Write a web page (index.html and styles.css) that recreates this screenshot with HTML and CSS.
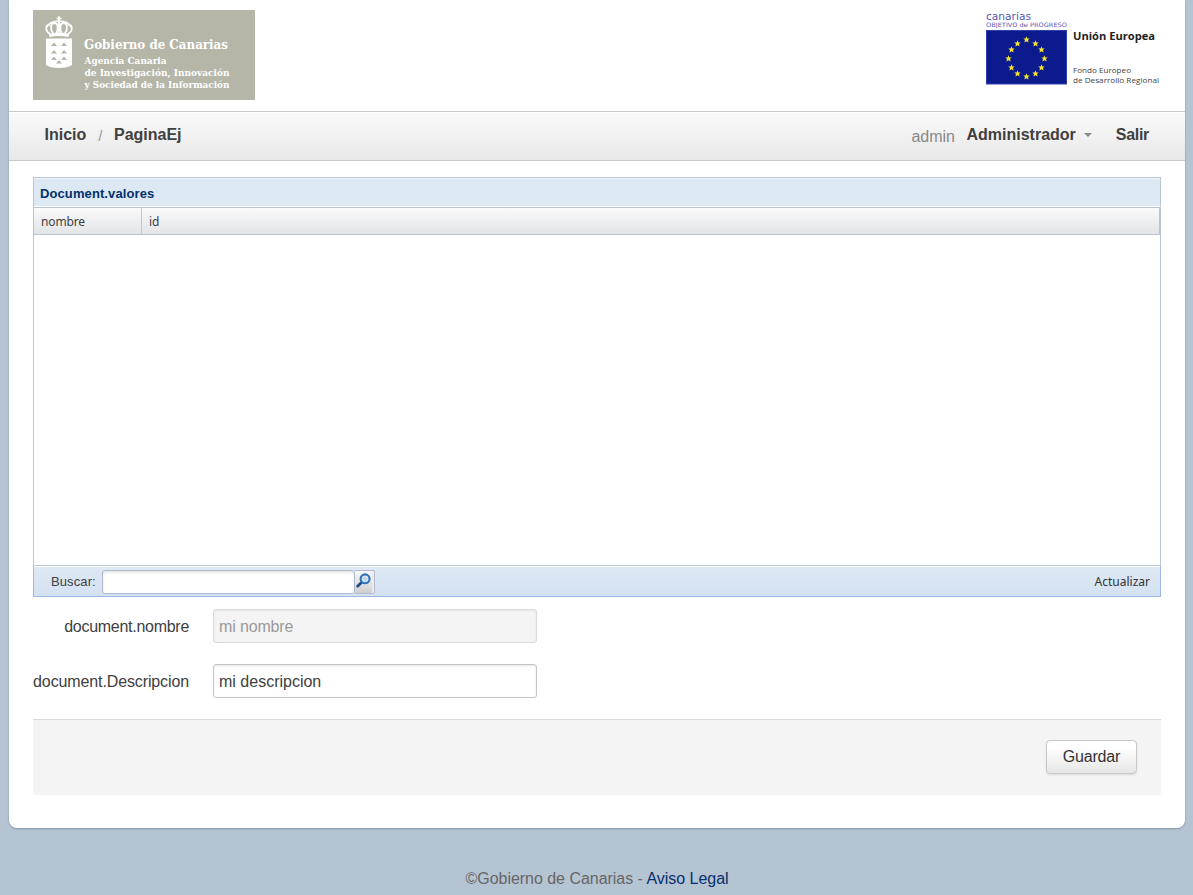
FILE: index.html
```html
<!DOCTYPE html>
<html lang="es">
<head>
<meta charset="utf-8">
<title>PaginaEj</title>
<link rel="stylesheet" href="styles.css">
</head>
<body>
<div class="page">
  <header class="header">
    <svg class="logo" width="222" height="90" viewBox="0 0 222 90">
      <rect width="222" height="90" fill="#b5b6a8"/>
      <g fill="none" stroke="#fff" stroke-width="1.8">
        <path d="M26 6v7M23.500 8.500h5" stroke-width="1.500"/>
        <path d="M17 24c-5-3-5-9 0-9.500M35 24c5-3 5-9 0-9.500M20.500 24c-4-5-3-11 1-11s4 6 1.500 11M31.500 24c4-5 3-11-1-11s-4 6-1.500 11M26 13v11"/>
        <path d="M14 17c2-4 7-6 12-6s10 2 12 6" stroke-width="1.300"/>
      </g>
      <path d="M16 24q10-2.500 20 0l-.5 3q-9.500-2-19 0z" fill="#fff"/>
      <path d="M13 28.500h26V55q-4 3-13 3t-13-3z" fill="#fff"/>
      <path d="M18 36l3-3.500 3 3.500zm10 0l3-3.500 3 3.500zM18 43.500l3-3.500 3 3.500zm10 0l3-3.500 3 3.500zM18 50l3-3.500 3 3.500zm10 0l3-3.500 3 3.500zM23 53.500l3-3.500 3 3.500z" fill="#b5b6a8"/>
      <g class="logo-text">
        <text x="51" y="39" font-size="13.500" textLength="144" lengthAdjust="spacingAndGlyphs">Gobierno de Canarias</text>
        <text x="51.500" y="53.500" font-size="10" textLength="82" lengthAdjust="spacingAndGlyphs">Agencia Canaria</text>
        <text x="51.500" y="65.700" font-size="10" textLength="145" lengthAdjust="spacingAndGlyphs">de Investigación, Innovación</text>
        <text x="51.500" y="78" font-size="10" textLength="145" lengthAdjust="spacingAndGlyphs">y Sociedad de la Información</text>
      </g>
    </svg>
    <svg class="eu" width="176" height="80" viewBox="0 0 176 80">
      <defs><path id="star" fill="#f4e52a" d="M0-3.200L.9-1 3.200-.9 1.500.6 2.100 2.900 0 1.700-2.100 2.900-1.500.6-3.200-.9-.9-1z"/></defs>
      <text class="eu-brand" x="1" y="9.500" font-size="10.500" textLength="45" lengthAdjust="spacingAndGlyphs">canarias</text>
      <text class="eu-brand" x="1" y="16.500" font-size="6" textLength="81" lengthAdjust="spacingAndGlyphs">OBJETIVO de PROGRESO</text>
      <rect x="1.500" y="20.500" width="80" height="53.500" fill="#0b1a8c" stroke="#2e3fa8"/>
      <use href="#star" x="41.500" y="29.500"/><use href="#star" x="50.500" y="33.500"/><use href="#star" x="56.500" y="39.500"/>
      <use href="#star" x="59.500" y="48.500"/><use href="#star" x="56.500" y="57.500"/><use href="#star" x="50.500" y="63.500"/>
      <use href="#star" x="41.500" y="66.500"/><use href="#star" x="32.500" y="63.500"/><use href="#star" x="26.500" y="57.500"/>
      <use href="#star" x="23.500" y="48.500"/><use href="#star" x="26.500" y="39.500"/><use href="#star" x="32.500" y="33.500"/>
      <text class="eu-title" x="88" y="30" font-size="11" textLength="82" lengthAdjust="spacingAndGlyphs">Unión Europea</text>
      <text class="eu-sub" x="88" y="62.500" font-size="8" textLength="58" lengthAdjust="spacingAndGlyphs">Fondo Europeo</text>
      <text class="eu-sub" x="88" y="72.500" font-size="8" textLength="86" lengthAdjust="spacingAndGlyphs">de Desarrollo Regional</text>
    </svg>
  </header>
  <nav class="nav">
    <div class="crumbs"><a>Inicio</a><span class="sep">/</span><a>PaginaEj</a></div>
    <div class="user"><span class="login">admin</span><a>Administrador</a><i class="caret"></i><a class="exit">Salir</a></div>
  </nav>
  <main class="content">
    <section class="grid">
      <h2 class="grid-title">Document.valores</h2>
      <div class="columns"><span class="col col-name">nombre</span><span class="col">id</span></div>
      <div class="rows"></div>
      <div class="toolbar">
        <label class="search-label" for="q">Buscar:</label>
        <input class="search" id="q" type="text">
        <button class="trigger" aria-label="Buscar">
          <svg width="17" height="17" viewBox="0 0 16 16"><path d="M6.500 8.500L2.500 12.500" stroke="#234b8c" stroke-width="2.600" stroke-linecap="round"/><circle cx="9.500" cy="5.500" r="4.200" fill="#d5e4f2" stroke="#3273b8" stroke-width="2"/><path d="M9.500 3.500v4M7.500 5.500h4" stroke="#b3c8dc" stroke-width=".8"/></svg>
        </button>
        <a class="refresh">Actualizar</a>
      </div>
    </section>
    <form class="form">
      <div class="field"><label class="label label-name" for="n">document.nombre</label><input class="input" id="n" value="mi nombre" disabled></div>
      <div class="field"><label class="label" for="d">document.Descripcion</label><input class="input" id="d" value="mi descripcion"></div>
      <div class="actions"><button class="save" type="button">Guardar</button></div>
    </form>
  </main>
</div>
<footer class="footer">©Gobierno de Canarias - <a class="legal">Aviso Legal</a></footer>
</body>
</html>
```

FILE: styles.css
```css
* { box-sizing: border-box; }
body { margin: 0; height: 895px; overflow: hidden; background: #b5c4d3; color: #404040; font: 16px/24px "Liberation Sans", Arial, sans-serif; }
.page { width: 1176px; height: 828px; margin-left: 9px; background: #fff; border-radius: 0 0 8px 8px; box-shadow: 0 1px 2px rgba(50, 75, 100, .4); }
.header { display: flex; justify-content: space-between; align-items: flex-start; height: 111px; padding: 10px 24px 0; }
.logo, .eu { display: block; }
.logo-text { fill: #fff; font-family: "DejaVu Serif", serif; font-weight: bold; }
.eu-brand { fill: #5658b5; font-family: "DejaVu Sans", sans-serif; }
.eu-title { fill: #222; font-family: "Open Sans", sans-serif; font-weight: bold; }
.eu-sub { fill: #444; font-family: "Open Sans", sans-serif; }
.nav { display: flex; justify-content: space-between; height: 50px; padding: 0 36px 0 35.5px; border: solid #c8c8c8; border-width: 1px 0; background: linear-gradient(#fafafa, #e8e8e8); box-shadow: inset 0 1px #fff; }
.crumbs, .user { display: flex; align-items: flex-start; padding-top: 11px; font-weight: bold; }
.sep { margin: 1px 11.5px 0 12px; font-size: 15px; font-weight: normal; color: #999; }
.login { margin: 2px 11.5px 0 0; font-weight: normal; color: #888; }
.caret { margin: 10px 24px 0 8px; border: solid transparent; border-width: 4px 4px 0; border-top-color: #888; }
.exit { letter-spacing: -.3px; }
.content { padding: 16px 24px 0; }
.grid-title { height: 30px; margin: 0; padding: 4px 6px 0; border: 1px solid #b7c4d4; border-bottom: 1px solid #fff; background: #dce8f4; box-shadow: inset 0 1px #f1f6fb; color: #04306b; font-size: 13px; letter-spacing: .1px; }
.columns { display: flex; height: 28px; border: 1px solid #b9c3cf; border-right-width: 2px; background: linear-gradient(#fafafa, #e2e4e7); font: 12px/27px "Noto Sans", sans-serif; }
.col { padding-left: 7px; }
.col-name { width: 108px; border-right: 1px solid #c5c5c5; letter-spacing: -.15px; }
.rows { height: 331px; border: solid #b9c8d8; border-width: 0 1px 1px; background: #fff; }
.toolbar { display: flex; align-items: center; height: 31px; padding-top: 2px; border: solid #99bbe8; border-width: 0 1px 1px; background: linear-gradient(#dfe9f4, #d3e1f1); box-shadow: inset 0 1px #fff; font-size: 13px; }
.search-label { width: 68px; padding-left: 17px; letter-spacing: .1px; }
.search { width: 253px; height: 24px; border: 1px solid #b0b8cb; border-radius: 3px; box-shadow: inset 0 2px 3px #e5e7e7; background: #fff; }
.trigger { width: 20px; height: 24px; padding: 0; border: solid #b5b8cf; border-width: 1px 1px 1px 0; border-radius: 0 2px 2px 0; background: linear-gradient(#f7f7f7, #e5e5e5 48%, #cfcfcf); box-shadow: inset -2px 0 #ececec; }
.trigger svg { display: block; margin-top: -1px; }
.refresh { margin: 0 10px 0 auto; font: 12px/24px "Noto Sans", sans-serif; color: #333; }
.form { padding-top: 12px; }
.field { display: flex; height: 55px; }
.label { width: 156px; margin-right: 24px; padding-top: 6px; text-align: right; white-space: nowrap; letter-spacing: -.12px; }
.label-name { letter-spacing: -.28px; }
.input { width: 324px; height: 34px; padding: 2px 5px 0; border: 1px solid #c5c5c5; border-radius: 3px; background: #fff; box-shadow: inset 0 1px 2px #e5e5e5; color: #404040; font: inherit; }
.input:disabled { border-color: #dadada; background: #f4f4f4; color: #999; letter-spacing: -.15px; }
.actions { display: flex; justify-content: flex-end; height: 76px; padding: 20px 24px; border-top: 1px solid #dadada; border-radius: 0 0 3px 3px; background: #f4f4f4; }
.save { width: 91px; height: 34px; padding: 0 0 1px; border: 1px solid #c8c8c8; border-radius: 4px; background: linear-gradient(#fff 20%, #e6e6e6); box-shadow: 0 1px 2px rgba(0, 0, 0, .1); color: #333; font: inherit; letter-spacing: -.2px; }
.footer { padding: 39px 0 0 1px; text-align: center; color: #666; letter-spacing: -.03px; }
.legal { color: #04306b; }
```
